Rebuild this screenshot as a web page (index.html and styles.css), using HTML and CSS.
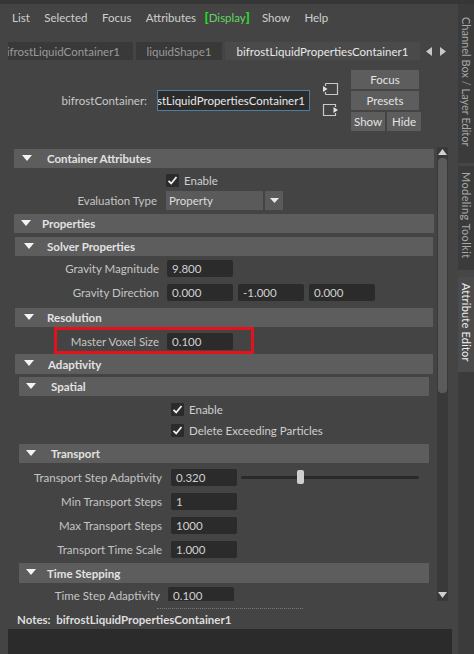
FILE: index.html
```html
<!DOCTYPE html>
<html>
<head>
<meta charset="utf-8">
<link rel="stylesheet" href="styles.css">
</head>
<body>
<div class="top-strip"></div>
<div class="app">
  <div class="main">
    <div class="menubar">
      <span class="menu-item">List</span>
      <span class="menu-item">Selected</span>
      <span class="menu-item">Focus</span>
      <span class="menu-item">Attributes</span>
      <span class="menu-item menu-display"><b class="brk">[</b>Display<b class="brk">]</b></span>
      <span class="menu-item">Show</span>
      <span class="menu-item">Help</span>
    </div>

    <div class="tabrow">
      <div class="tabs">
        <div class="tab tab-clip"><span>bifrostLiquidContainer1</span></div>
        <div class="tab tab-mid"><span>liquidShape1</span></div>
        <div class="tab tab-active"><span>bifrostLiquidPropertiesContainer1</span></div>
      </div>
      <div class="tab-arrows">
        <svg width="8" height="9" viewBox="0 0 8 9"><polygon points="7,0 7,9 1,4.5" fill="#c8c8c8"/></svg>
        <svg width="8" height="9" viewBox="0 0 8 9"><polygon points="1,0 1,9 7,4.5" fill="#c8c8c8"/></svg>
      </div>
    </div>

    <div class="objrow">
      <div class="obj-label">bifrostContainer:</div>
      <div class="obj-field"><span>bifrostLiquidPropertiesContainer1</span></div>
      <div class="obj-icons">
        <svg width="17" height="14" viewBox="0 0 17 14">
          <path d="M3.5 1.5 H15.5 V12.5 H3.5 M3.5 1.5 V4 M3.5 10 V12.5" fill="none" stroke="#c8c8c8" stroke-width="1.2"/>
          <polygon points="1,4 1,10 5.5,7" fill="#e0e0e0"/>
        </svg>
        <svg width="17" height="14" viewBox="0 0 17 14">
          <path d="M13.5 4 V1.5 H1.5 V12.5 H13.5 V10" fill="none" stroke="#c8c8c8" stroke-width="1.2"/>
          <polygon points="11.5,4 11.5,10 16,7" fill="#e0e0e0"/>
        </svg>
      </div>
      <div class="obj-buttons">
        <div class="btn btn-wide">Focus</div>
        <div class="btn btn-wide">Presets</div>
        <div class="btn-pair">
          <div class="btn btn-half">Show</div>
          <div class="btn btn-half">Hide</div>
        </div>
      </div>
    </div>

    <div class="scrollarea">
      <div class="scrollcontent">

        <div class="frame">
          <div class="fh fh-ca"><i class="tri"></i>Container Attributes</div>
          <div class="fb fb-ca">
            <div class="row row20">
              <div class="lbl lw-ca"></div>
              <div class="check"><svg width="13" height="13" viewBox="0 0 13 13"><path d="M2.5 6.8 L5.2 9.5 L10.5 3" fill="none" stroke="#f0f0f0" stroke-width="1.8"/></svg></div>
              <span class="check-text">Enable</span>
            </div>
            <div class="row row20">
              <div class="lbl lw-ca">Evaluation Type</div>
              <div class="dropdown">Property</div>
              <div class="drop-arrow"><svg width="9" height="5" viewBox="0 0 9 5"><polygon points="0,0 9,0 4.5,5" fill="#e8e8e8"/></svg></div>
            </div>
          </div>
        </div>

        <div class="frame">
          <div class="fh fh-props"><i class="tri"></i>Properties</div>
          <div class="fb fb-props">

            <div class="frame sub">
              <div class="fh fh-l2"><i class="tri"></i>Solver Properties</div>
              <div class="fb fb-solver">
                <div class="row row24">
                  <div class="lbl lw-solver">Gravity Magnitude</div>
                  <div class="field">9.800</div>
                </div>
                <div class="row row24">
                  <div class="lbl lw-solver">Gravity Direction</div>
                  <div class="field">0.000</div>
                  <div class="field">-1.000</div>
                  <div class="field">0.000</div>
                </div>
              </div>
            </div>

            <div class="frame sub">
              <div class="fh fh-l2"><i class="tri"></i>Resolution</div>
              <div class="fb fb-res">
                <div class="row row24 row-marked">
                  <div class="lbl lw-solver">Master Voxel Size</div>
                  <div class="field">0.100</div>
                  <div class="highlight-box"></div>
                </div>
              </div>
            </div>

            <div class="frame sub">
              <div class="fh fh-l2 fh-adapt"><i class="tri"></i>Adaptivity</div>
              <div class="fb fb-adapt">

                <div class="frame sub2">
                  <div class="fh fh-l3"><i class="tri"></i>Spatial</div>
                  <div class="fb fb-spatial">
                    <div class="row row21">
                      <div class="lbl lw-spatial"></div>
                      <div class="check"><svg width="13" height="13" viewBox="0 0 13 13"><path d="M2.5 6.8 L5.2 9.5 L10.5 3" fill="none" stroke="#f0f0f0" stroke-width="1.8"/></svg></div>
                      <span class="check-text">Enable</span>
                    </div>
                    <div class="row row21">
                      <div class="lbl lw-spatial"></div>
                      <div class="check"><svg width="13" height="13" viewBox="0 0 13 13"><path d="M2.5 6.8 L5.2 9.5 L10.5 3" fill="none" stroke="#f0f0f0" stroke-width="1.8"/></svg></div>
                      <span class="check-text">Delete Exceeding Particles</span>
                    </div>
                  </div>
                </div>

                <div class="frame sub2">
                  <div class="fh fh-l3"><i class="tri"></i>Transport</div>
                  <div class="fb fb-transport">
                    <div class="row row24">
                      <div class="lbl lw-transport">Transport Step Adaptivity</div>
                      <div class="field">0.320</div>
                      <div class="slider"><div class="groove"></div><div class="handle" style="left: 56px"></div></div>
                    </div>
                    <div class="row row24">
                      <div class="lbl lw-transport">Min Transport Steps</div>
                      <div class="field">1</div>
                    </div>
                    <div class="row row24">
                      <div class="lbl lw-transport">Max Transport Steps</div>
                      <div class="field">1000</div>
                    </div>
                    <div class="row row24">
                      <div class="lbl lw-transport">Transport Time Scale</div>
                      <div class="field">1.000</div>
                    </div>
                  </div>
                </div>

                <div class="frame sub2">
                  <div class="fh fh-l3 fh-time"><i class="tri"></i>Time Stepping</div>
                  <div class="fb">
                    <div class="row row24">
                      <div class="lbl lw-time">Time Step Adaptivity</div>
                      <div class="field">0.100</div>
                    </div>
                  </div>
                </div>

              </div>
            </div>

          </div>
        </div>

      </div>
      <div class="scrollbar">
        <svg class="sb-arrow" width="9" height="6" viewBox="0 0 9 6"><polygon points="0,6 9,6 4.5,0" fill="#d0d0d0"/></svg>
        <div class="sb-track"><div class="sb-thumb"></div></div>
        <svg class="sb-arrow" width="9" height="6" viewBox="0 0 9 6"><polygon points="0,0 9,0 4.5,6" fill="#d0d0d0"/></svg>
      </div>
    </div>

    <div class="splitter"></div>
    <div class="notes-label">Notes:&nbsp; bifrostLiquidPropertiesContainer1</div>
    <div class="notes-area"></div>
  </div>

  <div class="sidetabs">
    <div class="vtab vt-channel"><span>Channel Box / Layer Editor</span></div>
    <div class="vtab vt-model"><span>Modeling Toolkit</span></div>
    <div class="vtab vt-attr"><span>Attribute Editor</span></div>
    <div class="vt-rest"></div>
  </div>
</div>
</body>
</html>
```

FILE: styles.css
```css
* { box-sizing: border-box; }

html, body {
  margin: 0;
  padding: 0;
}

body {
  width: 474px;
  height: 654px;
  overflow: hidden;
  background: #444444;
  font-family: Lato, "Noto Sans", sans-serif;
  font-size: 11px;
  color: #c8c8c8;
}

.top-strip {
  height: 4px;
  background: #363636;
}

.app {
  display: flex;
  height: 650px;
}

.main {
  width: 458px;
  display: flex;
  flex-direction: column;
}

/* menu bar */
.menubar {
  height: 26px;
  display: flex;
  align-items: center;
  padding-left: 12px;
}
.menu-item {
  color: #cfcfcf;
  margin-right: 14.5px;
  font-size: 11.5px;
}
.menu-display {
  color: #62d462;
  margin-left: -6px;
  margin-right: 12px;
}
.brk {
  color: #22e022;
  font-weight: 900;
  font-size: 13px;
}

/* tabs */
.tabrow {
  margin-top: 12px;
  height: 18px;
  display: flex;
  align-items: stretch;
  padding-left: 8px;
}
.tabs {
  display: flex;
  gap: 3px;
}
.tab {
  background: #393939;
  color: #9a9a9a;
  display: flex;
  align-items: center;
  overflow: hidden;
  white-space: nowrap;
  font-size: 11.5px;
}
.tab-clip {
  width: 125px;
  justify-content: flex-end;
  padding-right: 13px;
}
.tab-mid {
  width: 86px;
  justify-content: center;
}
.tab-active {
  width: 195px;
  justify-content: center;
  background: #4a4a4a;
  color: #e8e8e8;
}
.tab-arrows {
  display: flex;
  align-items: center;
  gap: 6px;
  margin-left: 5px;
}

/* object row */
.objrow {
  margin-top: 9px;
  height: 62px;
  display: flex;
  align-items: center;
}
.obj-label {
  width: 150px;
  text-align: right;
  padding-right: 3px;
  color: #c8c8c8;
  font-size: 11.5px;
}
.obj-field {
  margin-left: 7px;
  width: 153px;
  height: 21px;
  background: #2b2b2b;
  border: 1px solid #4e7ea0;
  display: flex;
  align-items: center;
  justify-content: flex-end;
  overflow: hidden;
  white-space: nowrap;
  padding-right: 4px;
  color: #e8e8e8;
  font-size: 11.5px;
}
.obj-icons {
  margin-left: 12px;
  width: 17px;
  display: flex;
  flex-direction: column;
  gap: 7px;
  margin-top: -2px;
}
.obj-buttons {
  margin-left: 12px;
  width: 70px;
  display: flex;
  flex-direction: column;
  gap: 2px;
}
.btn {
  height: 19px;
  background: #5d5d5d;
  color: #e4e4e4;
  display: flex;
  align-items: center;
  justify-content: center;
  font-size: 11.5px;
}
.btn-wide { width: 68px; }
.btn-pair {
  display: flex;
  gap: 2px;
}
.btn-half { width: 34px; }

/* scroll area */
.scrollarea {
  margin-top: 16px;
  height: 454px;
  display: flex;
  padding-left: 14px;
}
.scrollcontent {
  width: 420px;
  height: 454px;
  overflow: hidden;
  padding-top: 2px;
}
.scrollbar {
  margin-left: 3px;
  width: 11px;
  background: #393939;
  display: flex;
  flex-direction: column;
  align-items: center;
  padding: 2px 0 3px;
}
.sb-arrow { flex: none; }
.sb-track {
  flex: 1;
  width: 100%;
  padding: 3px 1px;
}
.sb-thumb {
  height: 235px;
  background: #5b5b5b;
  border-radius: 4px;
}

/* frames */
.frame.sub { margin: 0 1px; }
.frame.sub2 { margin: 0 4px; }

.fh {
  height: 19px;
  background: #5d5d5d;
  color: #e2e2e2;
  font-weight: bold;
  display: flex;
  align-items: center;
  padding-left: 33px;
  position: relative;
  font-size: 11.5px;
}
.tri {
  width: 0;
  height: 0;
  border-left: 5px solid transparent;
  border-right: 5px solid transparent;
  border-top: 6px solid #f4f4f4;
  position: absolute;
  left: 8px;
  top: 6px;
}
.fh-ca { padding-left: 33px; }
.fh-props { padding-left: 28px; }
.fh-props .tri { left: 7px; }
.fh-l2 { padding-left: 32px; }
.fh-l2 .tri { left: 9px; }
.fh-adapt { height: 20px; padding-left: 33px; }
.fh-l3 { padding-left: 32px; }
.fh-l3 .tri { left: 7px; }
.fh-time { height: 20px; padding-left: 28px; }

.fb-ca { padding: 2px 0 4px; }
.fb-props { padding-top: 4px; }
.fb-solver { padding: 0 0 4px; }
.fb-res { padding: 2px 0 1px; }
.fb-adapt { padding-top: 3px; }
.fb-spatial { padding: 3px 0 3px; }
.fb-transport { padding: 2px 0 2px; }

.row {
  display: flex;
  align-items: center;
  position: relative;
}
.row20 { height: 20px; }
.row21 { height: 21px; }
.row24 { height: 24px; }

.lbl {
  flex: none;
  text-align: right;
  color: #c4c4c4;
  white-space: nowrap;
  font-size: 11.5px;
}
.lw-ca { width: 143px; margin-right: 9px; }
.lw-solver { width: 144px; margin-right: 8px; }
.lw-spatial { width: 152px; }
.lw-transport { width: 143px; margin-right: 9px; }
.lw-time { width: 141px; margin-right: 8px; }

.field {
  width: 66px;
  height: 17px;
  background: #2b2b2b;
  border-radius: 2px;
  color: #d0d0d0;
  display: flex;
  align-items: center;
  padding-left: 5px;
  margin-right: 5px;
  font-size: 11.5px;
}

.check {
  width: 13px;
  height: 13px;
  background: #2b2b2b;
  border-radius: 1px;
  display: flex;
}
.check-text {
  margin-left: 5px;
  color: #cfcfcf;
  font-size: 11.5px;
}

.dropdown {
  width: 97px;
  height: 19px;
  background: #5a5a5a;
  color: #dcdcdc;
  display: flex;
  align-items: center;
  padding-left: 3px;
  font-size: 11.5px;
}
.drop-arrow {
  margin-left: 2px;
  width: 18px;
  height: 19px;
  background: #5a5a5a;
  display: flex;
  align-items: center;
  justify-content: center;
}

.highlight-box {
  position: absolute;
  left: 39px;
  top: -2px;
  width: 200px;
  height: 27px;
  border: 3px solid #e3121c;
  pointer-events: none;
}

.slider {
  position: relative;
  width: 178px;
  height: 16px;
  margin-left: -1px;
}
.groove {
  position: absolute;
  left: 0;
  right: 0;
  top: 7px;
  height: 3px;
  background: #2a2a2a;
  border-radius: 2px;
}
.handle {
  position: absolute;
  top: 1px;
  width: 7px;
  height: 14px;
  background: #cfcfcf;
  border-radius: 2px;
}

/* bottom */
.splitter {
  margin: 7px 0 0 157px;
  width: 146px;
  height: 1px;
  border-top: 1px dotted #7a7a7a;
}
.notes-label {
  margin-top: 4px;
  padding-left: 17px;
  height: 15px;
  font-weight: bold;
  color: #dedede;
  white-space: nowrap;
  font-size: 11.5px;
}
.notes-area {
  margin: 1px 0 0 8px;
  width: 444px;
  flex: 1;
  background: #2b2b2b;
}

/* side tabs */
.sidetabs {
  width: 16px;
  display: flex;
  flex-direction: column;
  background: #464646;
}
.vtab {
  display: flex;
  justify-content: center;
  padding-top: 12px;
  color: #a8a8a8;
  background: #3b3b3b;
  font-size: 11px;
}
.vtab span {
  writing-mode: vertical-rl;
  white-space: nowrap;
}
.vt-channel { height: 159px; padding-top: 13px; }
.vt-model { height: 104px; margin-top: 3px; padding-top: 6px; letter-spacing: 0.4px; }
.vt-attr {
  height: 95px;
  margin-top: 7px;
  padding-top: 6px;
  background: #4b4b4b;
  color: #f0f0f0;
  letter-spacing: 0.2px;
}
.vt-rest {
  flex: 1;
  background: #3b3b3b;
}
```
